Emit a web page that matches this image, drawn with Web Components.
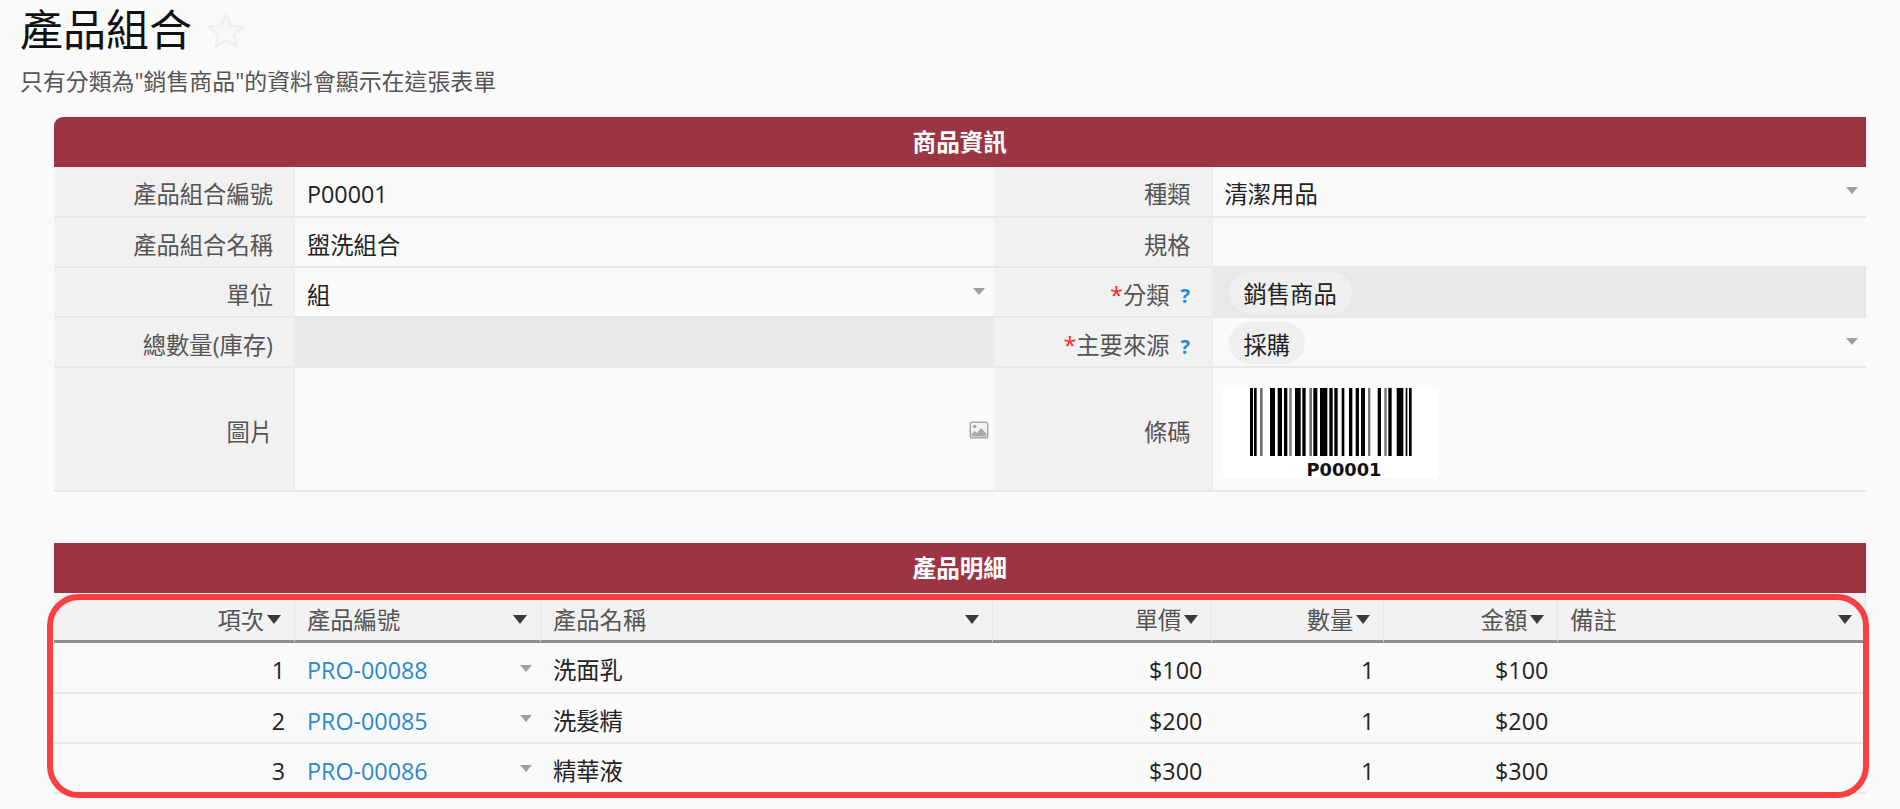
<!DOCTYPE html>
<html lang="zh-Hant">
<head>
<meta charset="utf-8">
<title>產品組合</title>
<style>
html,body{margin:0;padding:0;background:#fafafa}
body{font:23.3px/1.3 "Open Sans","Noto Sans CJK TC",sans-serif;color:#222}
</style>
</head>
<body>
<app-page>
  <page-head slot="head" heading="產品組合">只有分類為"銷售商品"的資料會顯示在這張表單</page-head>

  <section-bar rounded>商品資訊</section-bar>
  <form-grid>
    <form-cell label>產品組合編號</form-cell>
    <form-cell>P00001</form-cell>
    <form-cell label>種類</form-cell>
    <form-cell>清潔用品<mini-caret slot="end"></mini-caret></form-cell>

    <form-cell label>產品組合名稱</form-cell>
    <form-cell>盥洗組合</form-cell>
    <form-cell label>規格</form-cell>
    <form-cell></form-cell>

    <form-cell label>單位</form-cell>
    <form-cell>組<mini-caret slot="end"></mini-caret></form-cell>
    <form-cell label><req-mark></req-mark>分類<help-mark></help-mark></form-cell>
    <form-cell disabled><pill-tag>銷售商品</pill-tag></form-cell>

    <form-cell label>總數量(庫存)</form-cell>
    <form-cell disabled></form-cell>
    <form-cell label><req-mark></req-mark>主要來源<help-mark></help-mark></form-cell>
    <form-cell><pill-tag>採購</pill-tag><mini-caret slot="end"></mini-caret></form-cell>

    <form-cell label tall>圖片</form-cell>
    <form-cell tall><image-icon slot="end"></image-icon></form-cell>
    <form-cell label tall>條碼</form-cell>
    <form-cell tall><bar-code>P00001</bar-code></form-cell>
  </form-grid>

  <section-bar spaced>產品明細</section-bar>
  <detail-table>
    <table-head right>項次</table-head>
    <table-head>產品編號</table-head>
    <table-head>產品名稱</table-head>
    <table-head right>單價</table-head>
    <table-head right>數量</table-head>
    <table-head right>金額</table-head>
    <table-head>備註</table-head>

    <table-cell right>1</table-cell>
    <table-cell><link-text>PRO-00088</link-text><mini-caret slot="end" small></mini-caret></table-cell>
    <table-cell>洗面乳</table-cell>
    <table-cell right>$100</table-cell>
    <table-cell right>1</table-cell>
    <table-cell right>$100</table-cell>
    <table-cell></table-cell>

    <table-cell right>2</table-cell>
    <table-cell><link-text>PRO-00085</link-text><mini-caret slot="end" small></mini-caret></table-cell>
    <table-cell>洗髮精</table-cell>
    <table-cell right>$200</table-cell>
    <table-cell right>1</table-cell>
    <table-cell right>$200</table-cell>
    <table-cell></table-cell>

    <table-cell right>3</table-cell>
    <table-cell><link-text>PRO-00086</link-text><mini-caret slot="end" small></mini-caret></table-cell>
    <table-cell>精華液</table-cell>
    <table-cell right>$300</table-cell>
    <table-cell right>1</table-cell>
    <table-cell right>$300</table-cell>
    <table-cell></table-cell>

    <focus-ring slot="over"></focus-ring>
  </detail-table>
</app-page>

<script>
function el(name, css, html){
  customElements.define(name, class extends HTMLElement{
    constructor(){
      super();
      this.attachShadow({mode:'open'}).innerHTML = '<style>'+css+'</style>'+(typeof html==='function'?html(this):html);
    }
    connectedCallback(){
      if(typeof html==='function'){
        const s=this.shadowRoot, st=s.querySelector('style').outerHTML;
        s.innerHTML=st+html(this);
      }
    }
  });
}

el('app-page',
  ':host{display:block;width:1900px;height:809px;overflow:hidden;box-sizing:border-box}'+
  '.body{display:flex;flex-direction:column;margin:0 34px 0 53.5px}',
  '<slot name="head"></slot><div class="body"><slot></slot></div>');

el('page-head',
  ':host{display:block;height:117.3px;box-sizing:border-box;padding:0 0 0 20px}'+
  '.t{display:flex;align-items:center;gap:15px;height:59px;font-size:43px;line-height:59px;color:#111}'+
  'svg{width:38px;height:36px;display:block;margin-top:1px}'+
  '.s{font-size:22.9px;line-height:30px;color:#555;margin-top:8px}',
  h=>'<div class="t"><span>'+(h.getAttribute('heading')||'')+'</span>'+
     '<svg viewBox="0 0 38 36"><polygon points="19,2 24,13.5 36.5,14.5 27,23 30,35 19,28.5 8,35 11,23 1.5,14.5 14,13.5" fill="#f8f8f8" stroke="#efefef" stroke-width="2.2" stroke-linejoin="round"/></svg></div>'+
     '<div class="s"><slot></slot></div>');

el('section-bar',
  ':host{display:flex;align-items:center;justify-content:center;height:50px;box-sizing:border-box;padding-top:1px;background:#9b3544;color:#fff;font-weight:700;font-size:23.6px}'+
  ':host([rounded]){border-radius:9px 0 0 0}'+
  ':host([spaced]){margin-top:51px}',
  '<slot></slot>');

el('form-grid',
  ':host{display:grid;grid-template-columns:241.5px 698.5px 219px 653.5px}',
  '<slot></slot>');

el('form-cell',
  ':host{display:flex;align-items:center;box-sizing:border-box;height:50.25px;padding:6px 12px 0;border-bottom:2px solid #e7e7e7;background:#fafafa;color:#222;min-width:0}'+
  ':host([label]){background:#f1f1f1;color:#555;padding:6px 21px 0 12px;border-right:1px solid #ebebeb}'+
  ':host([label]) .m{justify-content:flex-end}'+
  ':host([disabled]){background:#e8e8e8}'+
  ':host([tall]){height:124px}'+
  '.m{flex:1;display:flex;align-items:center;min-width:0}'+
  '::slotted([slot=end]){flex:none}',
  '<div class="m" part="main"><slot></slot></div><slot name="end"></slot>');

el('mini-caret',
  ':host{display:block;width:0;height:0;border-left:6.5px solid transparent;border-right:6.5px solid transparent;border-top:7.5px solid #a0a0a0;margin:-7px -3.5px 0 0}'+
  ':host([small]){border-left-width:6px;border-right-width:6px;border-top-width:7px;margin:-4px -3px 0 0}',
  '');

el('req-mark',':host{color:#f22;display:inline}','*');

el('help-mark',
  ':host{display:inline-block;color:#2a88d0;font-weight:700;font-size:20px;line-height:20px;width:11px;margin-left:11px;margin-right:-1px;padding-top:3px}',
  '?');

el('pill-tag',
  ':host{display:inline-flex;align-items:center;box-sizing:border-box;height:42px;padding:3px 15px 0;border-radius:21px;background:#efefef;color:#222;margin:-4px 0 0 4px}',
  '<slot></slot>');

el('image-icon',
  ':host{display:block;width:20px;height:18px;margin-right:-7px;margin-top:-4px}svg{display:block;width:100%;height:100%}',
  '<svg viewBox="0 0 19 18" preserveAspectRatio="none"><rect x=".5" y=".5" width="18" height="17" rx="2.5" fill="#a9a9a9"/><rect x="2" y="2" width="15" height="14" rx="1" fill="#f4f4f4"/><circle cx="5.5" cy="5.5" r="1.8" fill="#a9a9a9"/><path d="M2.5 15.5v-2.5l3-3 2 2 4-5 5 5.5v3z" fill="#a9a9a9"/></svg>');

const bars=[[120,129],[132,140],[150,158,.55],[180,195],[203,216],[222,232],[238,245,.55],[255,272],[277,287],[298,306,.55],[310,322],[330,352],[358,368],[373,383],[395,403],[417,427],[437,447],[453,465],[474,481,.55],[503,513],[523,530,.55],[535,545],[560,580],[587,592],[597,605]];
el('bar-code',
  ':host{display:block;width:215px;height:90px;background:#fff;margin-left:-2px;margin-top:1px;flex:none}'+
  'svg{display:block;width:215px;height:68px}'+
  '.c{display:block;box-sizing:border-box;width:215px;padding-left:84px;font:700 17.8px/20px "DejaVu Sans",sans-serif;color:#111;margin-top:4px}',
  '<svg viewBox="0 0 215 68">'+bars.map(b=>'<rect x="'+((b[0]-39)/3).toFixed(2)+'" y="0" width="'+((b[1]-b[0])/3).toFixed(2)+'" height="68" fill="#000" opacity="'+(b[2]||1)+'"/>').join('')+'</svg><span class="c"><slot></slot></span>');

el('detail-table',
  ':host{display:grid;position:relative;grid-template-columns:241.5px 246px 451.7px 219.6px 172px 174px 307.7px}',
  '<slot></slot><slot name="over"></slot>');

el('table-head',
  ':host{display:flex;align-items:center;box-sizing:border-box;height:50px;padding:6px 13px 0 12px;background:#f2f2f2;color:#555;border-bottom:3px solid #8e8e8e;border-right:1px solid #e6e6e6;gap:3px}'+
  '.x{flex:1;min-width:0}'+
  ':host([right]) .x{text-align:right}'+
  'i{display:block;flex:none;width:0;height:0;border-left:7.5px solid transparent;border-right:7.5px solid transparent;border-top:9px solid #3a3a3a;margin-top:0}',
  '<span class="x"><slot></slot></span><i></i>');

el('table-cell',
  ':host{display:flex;align-items:center;box-sizing:border-box;height:50.25px;padding:6px 12px 0;border-bottom:2px solid #e7e7e7;background:#fafafa;color:#222}'+
  ':host([right]){justify-content:flex-end;padding-right:10px}'+
  '.m{min-width:0}'+
  ':host(:not([right])) .m{flex:1}',
  '<div class="m"><slot></slot></div><slot name="end"></slot>');

el('link-text',':host{color:#2a88d0}','<slot></slot>');

el('focus-ring',
  ':host{position:absolute;left:-6.5px;right:-3px;top:.7px;height:204px;box-sizing:border-box;border:6px solid #fb3e40;border-radius:32px;pointer-events:none}',
  '');
</script>
</body>
</html>
